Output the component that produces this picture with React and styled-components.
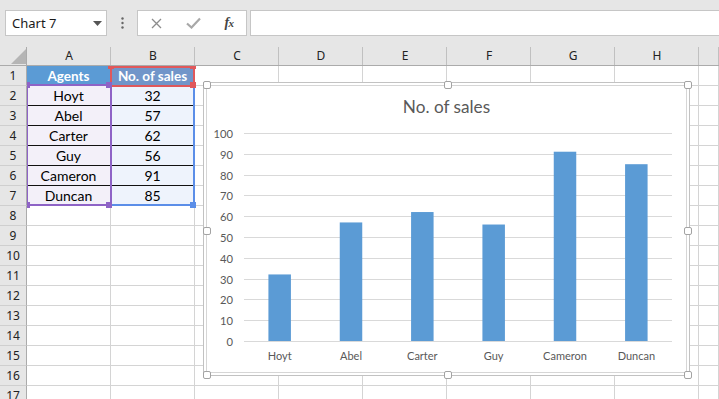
import React from 'react';
import styled, { createGlobalStyle } from 'styled-components';

const Global = createGlobalStyle`
  html, body { margin: 0; padding: 0; background: #fff; overflow: hidden; }
  body { width: 719px; height: 399px; }
`;

const Page = styled.div`
  width: 719px;
  height: 399px;
  overflow: hidden;
  background: #fff;
  display: flex;
  flex-direction: column;
  font-family: "Noto Sans", "Liberation Sans", sans-serif;
`;

const TopBar = styled.div`
  height: 46px;
  flex: none;
  box-sizing: border-box;
  background: #e6e6e6;
  padding: 10px 0 0 5px;
  display: flex;
  align-items: flex-start;
`;

const NameBox = styled.div`
  width: 102px;
  height: 26px;
  box-sizing: border-box;
  border: 1px solid #c6c6c6;
  background: #fff;
  display: flex;
  align-items: center;
  justify-content: space-between;
  padding: 0 4px 0 6px;
  font-size: 13px;
  color: #1a1a1a;
`;

const Dots = styled.div`
  width: 30px;
  height: 26px;
  display: flex;
  align-items: center;
  justify-content: center;
`;

const FormulaButtons = styled.div`
  width: 110px;
  height: 26px;
  box-sizing: border-box;
  border: 1px solid #c6c6c6;
  background: #fff;
  display: flex;
  align-items: center;
`;

const FxSlot = styled.div`
  width: ${p => p.$w}px;
  height: 100%;
  display: flex;
  align-items: center;
  justify-content: center;
`;

const Fx = styled.span`
  font-family: "Liberation Serif", "DejaVu Serif", serif;
  font-style: italic;
  font-weight: bold;
  font-size: 14px;
  color: #444;
  letter-spacing: -0.5px;
  & > small { font-size: 11px; }
`;

const FormulaInput = styled.div`
  flex: 1;
  margin-left: 3px;
  height: 26px;
  box-sizing: border-box;
  border: 1px solid #c6c6c6;
  border-right: none;
  background: #fff;
`;

const Sheet = styled.div`
  position: relative;
  flex: 1;
  display: grid;
  grid-template-columns: 27px repeat(8, 84px) 1fr;
  grid-template-rows: 20px;
  grid-auto-rows: 20px;
  overflow: hidden;
`;

const ColHead = styled.div`
  position: relative;
  box-sizing: border-box;
  background: #e6e6e6;
  border-bottom: 1px solid #ababab;
  display: flex;
  align-items: center;
  justify-content: center;
  font-size: 12px;
  color: #222;
  &::after {
    content: "";
    position: absolute;
    right: 0;
    top: 1px;
    bottom: 0;
    width: 1px;
    background: #c0c0c0;
  }
`;

const Corner = styled(ColHead)`
  justify-content: flex-end;
  align-items: flex-end;
  padding: 0 1px 1px 0;
  &::after { background: #ababab; }
`;

const RowHead = styled.div`
  box-sizing: border-box;
  background: #e6e6e6;
  border-right: 1px solid #ababab;
  border-bottom: 1px solid #cfcfcf;
  display: flex;
  align-items: center;
  justify-content: center;
  font-size: 12px;
  color: #222;
`;

const Cell = styled.div`
  box-sizing: border-box;
  border-right: 1px solid #d4d4d4;
  border-bottom: 1px solid ${p => (p.$line ? '#111' : '#d4d4d4')};
  background: ${p => p.$fill || '#fff'};
  color: ${p => p.$color || '#000'};
  font-family: Lato, "Liberation Sans", sans-serif;
  font-size: ${p => (p.$bold ? '13.5px' : '14px')};
  font-weight: ${p => (p.$bold ? 700 : 400)};
  display: flex;
  align-items: center;
  justify-content: center;
  white-space: nowrap;
  overflow: hidden;
`;

const Overlay = styled.div`
  position: absolute;
  top: 20px;
  left: 27px;
  right: 0;
  bottom: 0;
  overflow: hidden;
  pointer-events: none;
`;

const RangeBox = styled.div`
  position: absolute;
  box-sizing: border-box;
  border: 2px solid ${p => p.$color};
`;

const RangeHandle = styled.div`
  position: absolute;
  width: 6px;
  height: 6px;
  background: ${p => p.$color};
`;

const ChartFrame = styled.div`
  position: absolute;
  left: 176px;
  top: 16px;
  width: 487px;
  height: 294px;
  box-sizing: border-box;
  border: 1px solid #c2c2c2;
  padding: 2px;
  background: #fff;
`;

const ChartArea = styled.div`
  height: 100%;
  box-sizing: border-box;
  border: 1px solid #d6d6d6;
  background: #fff;
  display: flex;
  flex-direction: column;
`;

const ChartTitle = styled.div`
  height: 34px;
  box-sizing: border-box;
  padding-top: 9px;
  line-height: 24px;
  text-align: center;
  font-family: Lato, "Liberation Sans", sans-serif;
  font-size: 17.2px;
  color: #595959;
`;

const FrameHandle = styled.div`
  position: absolute;
  width: 8px;
  height: 8px;
  box-sizing: border-box;
  border: 1px solid #a3a3a3;
  border-radius: 2px;
  background: #fff;
`;

const cols = ['A', 'B', 'C', 'D', 'E', 'F', 'G', 'H', ''];
const data = [
  ['Hoyt', 32],
  ['Abel', 57],
  ['Carter', 62],
  ['Guy', 56],
  ['Cameron', 91],
  ['Duncan', 85],
];

const Chart = () => {
  const left = 37;
  const right = 465;
  const y0 = 221;
  const unit = 2.08;
  const w = (right - left) / data.length;
  const bw = 22.5;
  const ticks = [0, 10, 20, 30, 40, 50, 60, 70, 80, 90, 100];
  const font = 'Lato, "Liberation Sans", sans-serif';
  return (
    <svg width="479" height="252" viewBox="0 0 479 252">
      {ticks.map(t => {
        const y = Math.round(y0 - t * unit) + 0.5;
        return (
          <g key={t}>
            <line x1={left} x2={right} y1={y} y2={y} stroke="#d9d9d9" strokeWidth="1" />
            <text x="26" y={y + 4} textAnchor="end" fontFamily={font} fontSize="11.2" fill="#595959">
              {t}
            </text>
          </g>
        );
      })}
      {data.map(([name, v], i) => (
        <g key={name}>
          <rect x={left + i * w + (w - bw) / 2} y={y0 - v * unit} width={bw} height={v * unit} fill="#5b9bd5" />
          <text x={left + i * w + w / 2} y="240" textAnchor="middle" fontFamily={font} fontSize="11" fill="#595959">
            {name}
          </text>
        </g>
      ))}
    </svg>
  );
};

const handles = [
  [-1, -2], [240, -2], [480, -2],
  [-1, 144], [480, 144],
  [-1, 288], [240, 288], [480, 288],
];

const rangeHandles = [
  ['#e0585b', 81, -3], ['#e0585b', 163, -3], ['#e0585b', 163, 16],
  ['#5b8ee8', 163, 136],
  ['#8e63c6', -3, 16], ['#8e63c6', 79, 16], ['#8e63c6', -3, 136], ['#8e63c6', 79, 136],
];

export default function App() {
  const rows = [];
  for (let r = 1; r <= 17; r++) {
    const cells = [];
    for (let c = 0; c < cols.length; c++) {
      let content = null;
      let props = {};
      if (r === 1 && c === 0) {
        content = 'Agents';
        props = { $fill: '#5b9bd5', $color: '#fff', $bold: true };
      } else if (r === 1 && c === 1) {
        content = 'No. of sales';
        props = { $fill: '#7195c9', $color: '#fff', $bold: true };
      } else if (r >= 2 && r <= 7 && c <= 1) {
        content = data[r - 2][c];
        props = { $fill: c === 0 ? '#f3f0f9' : '#eef3fc', $line: true };
      }
      cells.push(
        <Cell key={c} {...props}>
          {content}
        </Cell>
      );
    }
    rows.push(
      <React.Fragment key={r}>
        <RowHead>{r}</RowHead>
        {cells}
      </React.Fragment>
    );
  }

  return (
    <Page>
      <Global />
      <TopBar>
        <NameBox>
          <span>Chart 7</span>
          <svg width="9" height="5" viewBox="0 0 9 5">
            <polygon points="0,0 9,0 4.5,5" fill="#555" />
          </svg>
        </NameBox>
        <Dots>
          <svg width="3" height="12" viewBox="0 0 3 12">
            <circle cx="1.5" cy="1.5" r="1.2" fill="#666" />
            <circle cx="1.5" cy="6" r="1.2" fill="#666" />
            <circle cx="1.5" cy="10.5" r="1.2" fill="#666" />
          </svg>
        </Dots>
        <FormulaButtons>
          <FxSlot $w={37}>
            <svg width="11" height="11" viewBox="0 0 11 11">
              <path d="M1 1 L10 10 M10 1 L1 10" stroke="#8c8c8c" strokeWidth="1.3" fill="none" />
            </svg>
          </FxSlot>
          <FxSlot $w={37}>
            <svg width="15" height="12" viewBox="0 0 15 12">
              <path d="M1 6.5 L5.5 10.5 L14 1.5" stroke="#a8a8a8" strokeWidth="2.2" fill="none" />
            </svg>
          </FxSlot>
          <FxSlot $w={34}>
            <Fx>
              f<small>x</small>
            </Fx>
          </FxSlot>
        </FormulaButtons>
        <FormulaInput />
      </TopBar>
      <Sheet>
        <Corner>
          <svg width="15" height="15" viewBox="0 0 15 15">
            <polygon points="0,15 15,15 15,0" fill="#b5b5b5" />
          </svg>
        </Corner>
        {cols.map((c, i) => (
          <ColHead key={i}>{c}</ColHead>
        ))}
        {rows}
        <Overlay>
          <RangeBox $color="#5b8ee8" style={{ left: 83, top: 19, width: 85, height: 121 }} />
          <RangeBox $color="#8e63c6" style={{ left: -1, top: 18, width: 86, height: 122 }} />
          <RangeBox $color="#e0585b" style={{ left: 83, top: 0, width: 85, height: 21 }} />
          {rangeHandles.map(([color, x, y], i) => (
            <RangeHandle key={i} $color={color} style={{ left: x, top: y }} />
          ))}
          <ChartFrame>
            <ChartArea>
              <ChartTitle>No. of sales</ChartTitle>
              <Chart />
            </ChartArea>
            {handles.map(([x, y], i) => (
              <FrameHandle key={i} style={{ left: x, top: y }} />
            ))}
          </ChartFrame>
        </Overlay>
      </Sheet>
    </Page>
  );
}
